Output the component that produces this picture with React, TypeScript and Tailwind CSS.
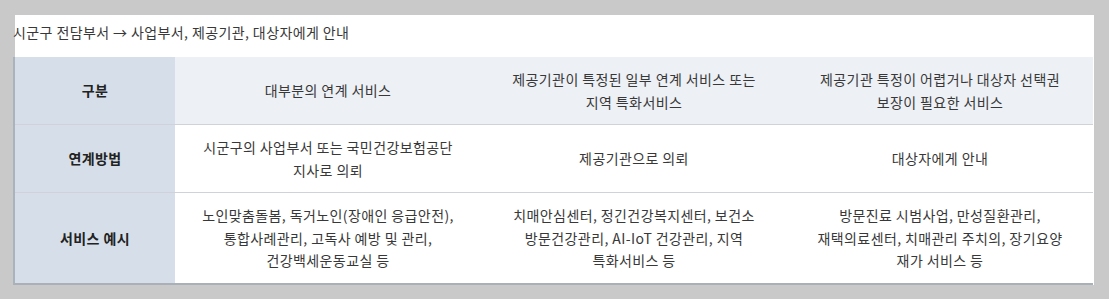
import React from "react";

const font = { fontFamily: '"Noto Sans CJK KR", "Noto Sans", sans-serif' };

type Row = { head: string[]; cells: string[][]; header?: boolean };

const rows: Row[] = [
  {
    head: ["구분"],
    cells: [
      ["대부분의 연계 서비스"],
      ["제공기관이 특정된 일부 연계 서비스 또는", "지역 특화서비스"],
      ["제공기관 특정이 어렵거나 대상자 선택권", "보장이 필요한 서비스"],
    ],
    header: true,
  },
  {
    head: ["연계방법"],
    cells: [
      ["시군구의 사업부서 또는 국민건강보험공단", "지사로 의뢰"],
      ["제공기관으로 의뢰"],
      ["대상자에게 안내"],
    ],
  },
  {
    head: ["서비스 예시"],
    cells: [
      ["노인맞춤돌봄, 독거노인(장애인 응급안전),", "통합사례관리, 고독사 예방 및 관리,", "건강백세운동교실 등"],
      ["치매안심센터, 정긴건강복지센터, 보건소", "방문건강관리, AI-IoT 건강관리, 지역", "특화서비스 등"],
      ["방문진료 시범사업, 만성질환관리,", "재택의료센터, 치매관리 주치의, 장기요양", "재가 서비스 등"],
    ],
  },
];

function Lines({ lines }: { lines: string[] }) {
  return (
    <>
      {lines.map((l, i) => (
        <span key={i} className="block whitespace-nowrap">
          {l}
        </span>
      ))}
    </>
  );
}

export default function App() {
  return (
    <div className="h-[299px] w-[1109px] overflow-hidden bg-[#c9c9c9] pl-[15px] pt-[15px]" style={font}>
      <div className="w-[1079px] bg-white">
        <div className="-ml-[2px] pt-[6px] pb-[14px] text-[14px] leading-[22px] tracking-[0.4px] text-[#383838]">
          시군구 전담부서 → 사업부서, 제공기관, 대상자에게 안내
        </div>
        <div className="-ml-[2px] grid w-[1080px] grid-cols-[160px_306px_306px_306px] border-l-2 border-b-2 border-l-[#a9b3be] border-b-[#a9b0b8] text-[14px] leading-[22.5px] tracking-[0.4px] text-[#383838]">
          {rows.map((r, ri) => {
            const last = ri === rows.length - 1;
            const bb = last ? "" : "border-b border-[#cfd3d8]";
            return (
              <React.Fragment key={ri}>
                <div className={`flex items-center justify-center bg-[#d6dfe9] py-[11px] text-center font-bold text-[#222] ${bb}`}>
                  <Lines lines={r.head} />
                </div>
                {r.cells.map((c, ci) => (
                  <div
                    key={ci}
                    className={`flex items-center justify-center px-5 py-[11px] text-center ${r.header ? "bg-[#edf0f5]" : "bg-white"} ${bb}`}
                  >
                    <div>
                      <Lines lines={c} />
                    </div>
                  </div>
                ))}
              </React.Fragment>
            );
          })}
        </div>
      </div>
    </div>
  );
}
